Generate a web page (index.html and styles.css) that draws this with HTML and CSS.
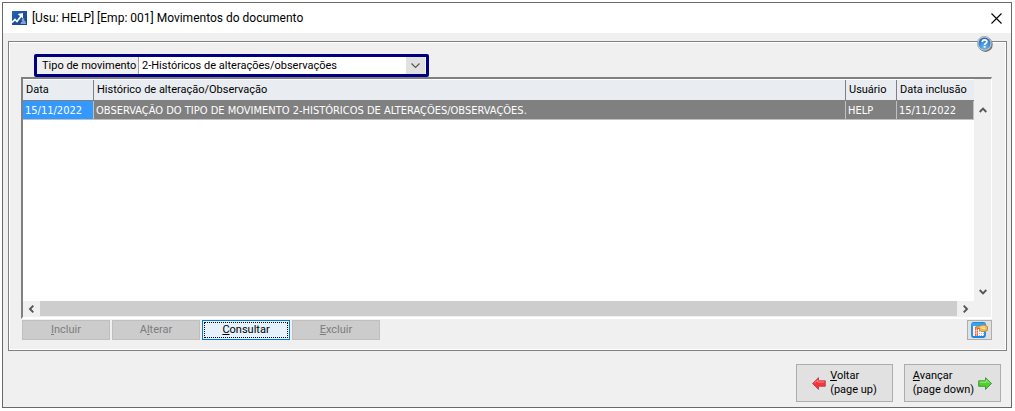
FILE: index.html
```html
<!DOCTYPE html>
<html lang="pt-BR">
<head>
<meta charset="utf-8">
<title>Movimentos do documento</title>
<link rel="stylesheet" href="styles.css">
</head>
<body>
<div class="window">
  <header class="titlebar">
    <svg class="app-icon" viewBox="0 0 15 14" aria-hidden="true">
      <defs><linearGradient id="app" x1="0" y1="0" x2="1" y2="1"><stop offset="0" stop-color="#2464b8"/><stop offset="1" stop-color="#153e88"/></linearGradient></defs>
      <rect width="15" height="14" fill="url(#app)"/>
      <path d="M0 11.500L3 8.500L5 10.500L9.500 4.500" fill="none" stroke="#fff" stroke-width="1.700"/>
      <path d="M5.500 3L11 2V7.500Z" fill="#fff"/>
      <path d="M11 7l1.500 1-.5 1.500 1.500.5v1.500l1 1.500H8.500l.5-2 1.500-.5-1-1.500z" fill="#7fa3d2"/>
    </svg>
    <h1 class="title">[Usu: HELP] [Emp: 001] Movimentos do documento</h1>
    <button class="close" type="button" aria-label="Fechar">
      <svg viewBox="0 0 11 11"><path d="M.5.5l10 10M10.500.5l-10 10" fill="none" stroke="#000" stroke-width="1.1"/></svg>
    </button>
  </header>
  <main class="content">
    <section class="panel">
      <button class="help" type="button" aria-label="Ajuda">
        <svg viewBox="0 0 16 16">
          <defs><radialGradient id="help" cx=".5" cy=".8" r=".8"><stop offset="0" stop-color="#63bdf5"/><stop offset="1" stop-color="#2463b8"/></radialGradient></defs>
          <circle cx="8.500" cy="8.700" r="7.200" fill="#777"/>
          <circle cx="7.500" cy="7.500" r="7.200" fill="#c5ccd5" stroke="#888" stroke-width=".5"/>
          <circle cx="7.500" cy="7.500" r="6" fill="url(#help)"/>
          <path d="M5.300 6c0-3 4.600-2.700 4.600-.3 0 1.500-2.300 1.500-2.300 3.200" fill="none" stroke="#fff" stroke-width="1.700"/>
          <rect x="6.700" y="10" width="1.800" height="1.600" fill="#fff"/>
        </svg>
      </button>
      <div class="filter">
        <label class="filter-label" for="tipo">Tipo de movimento</label>
        <div class="combo">
          <select id="tipo" class="combo-select">
            <option>2-Históricos de alterações/observações</option>
          </select>
          <span class="combo-arrow"><svg viewBox="0 0 9 5"><path d="M.5.5l4 4 4-4" fill="none" stroke="#555" stroke-width="1.100"/></svg></span>
        </div>
      </div>
      <div class="grid">
        <div class="grid-view">
          <table class="table">
            <colgroup><col class="col-date"><col><col class="col-user"><col class="col-added"></colgroup>
            <thead><tr><th>Data</th><th>Histórico de alteração/Observação</th><th>Usuário</th><th>Data inclusão</th></tr></thead>
            <tbody><tr><td class="current">15/11/2022</td><td>OBSERVAÇÃO DO TIPO DE MOVIMENTO 2-HISTÓRICOS DE ALTERAÇÕES/OBSERVAÇÕES.</td><td>HELP</td><td>15/11/2022</td></tr></tbody>
          </table>
        </div>
        <div class="vscroll">
          <svg class="v-arrow" viewBox="0 0 8 6"><path d="M.7 5L4 1.700 7.300 5" fill="none" stroke="#555" stroke-width="1.900"/></svg>
          <svg class="v-arrow" viewBox="0 0 8 6"><path d="M.7 1L4 4.300 7.300 1" fill="none" stroke="#555" stroke-width="1.900"/></svg>
        </div>
        <div class="hscroll">
          <svg class="h-arrow" viewBox="0 0 6 8"><path d="M5.300.7L2 4l3.300 3.300" fill="none" stroke="#555" stroke-width="1.900"/></svg>
          <span class="thumb"></span>
          <svg class="h-arrow" viewBox="0 0 6 8"><path d="M.7.7L4 4 .7 7.300" fill="none" stroke="#555" stroke-width="1.900"/></svg>
        </div>
      </div>
      <div class="actions">
        <button class="btn" type="button" disabled><span><u>I</u>ncluir</span></button>
        <button class="btn" type="button" disabled><span>A<u>l</u>terar</span></button>
        <button class="btn btn-focus" type="button"><span><u>C</u>onsultar</span></button>
        <button class="btn" type="button" disabled><span><u>E</u>xcluir</span></button>
        <button class="btn-config" type="button" aria-label="Configurar grade">
          <svg viewBox="0 0 17 16">
            <rect x="1" y="1" width="13" height="14" rx="1.500" fill="#f4f5ff" stroke="#1689e4" stroke-width="1.800"/>
            <path d="M1 1h13v3H1z" fill="#35a5f2"/>
            <path d="M4 5h5v2H7v7H4z" fill="#f5643c"/>
            <path d="M5.500 6v8M4 8.500h3M4 11h3" stroke="#fff" stroke-width=".5"/>
            <path d="M8 9.500h6M8 11.500h6M8 13.500h6" stroke="#a9b5dc" stroke-width="1" stroke-dasharray="1 1"/>
            <path d="M5 4.300h4l2-1.300h3l2.500 1.500v4L14 9.500h-3L8.500 8.500V6H5z" fill="#edba58" stroke="#b77a28" stroke-width=".7"/>
            <path d="M9 5h5M10.500 6.500h3.500" stroke="#ffe6a2"/>
          </svg>
        </button>
      </div>
    </section>
    <nav class="nav">
      <button class="nav-btn" type="button">
        <svg class="nav-arrow" viewBox="0 0 14 13"><path d="M.5 6.500L6.500 .7v3.100H13.300v5.500H6.500v3.100z" fill="#f8333c" stroke="#b93642" stroke-width=".8"/><path d="M2.500 6L5.800 3v2h6.500" fill="none" stroke="#ff858a"/></svg>
        <span><u>V</u>oltar<br>(page up)</span>
      </button>
      <button class="nav-btn" type="button">
        <span><u>A</u>vançar<br>(page down)</span>
        <svg class="nav-arrow" viewBox="0 0 14 13"><path d="M13.500 6.500L7.500 .7v3.100H.7v5.500h6.800v3.100z" fill="#4ed12e" stroke="#30812a" stroke-width=".8"/><path d="M1.700 5.200h6.500V3l3.300 3" fill="none" stroke="#9af080"/></svg>
      </button>
    </nav>
  </main>
</div>
</body>
</html>
```
FILE: styles.css
```css
* { box-sizing: border-box; }
body {
  margin: 0;
  padding: 2px 3px 3px 2px;
  min-height: 100vh;
  display: flex;
  background: #fff;
  color: #000;
  font: 11px/14px Roboto, sans-serif;
}
svg { display: block; }
button, select { font: inherit; color: inherit; margin: 0; padding: 0; border-radius: 0; }
.window {
  flex: 1;
  min-width: 0;
  display: flex;
  flex-direction: column;
  border: 1px solid #696969;
  background: #f0f0f0;
}
.titlebar {
  display: flex;
  align-items: center;
  height: 30px;
  padding: 0 9px;
  background: #fff;
}
.app-icon { width: 15px; height: 14px; }
.title { flex: 1; margin: 0 0 0 5px; font: 12px/16px Roboto, sans-serif; }
.close { border: 0; background: none; }
.close svg { width: 11px; height: 11px; }
.content { flex: 1; display: flex; flex-direction: column; padding: 8px 4px 5px 5px; }
.panel {
  position: relative;
  flex: 1;
  display: flex;
  flex-direction: column;
  padding: 12px 14px 10px 12px;
  border: 1px solid #828282;
  box-shadow: inset 1px 1px #fff, inset -1px -1px #fff;
}
.help { position: absolute; top: -6px; right: 13px; border: 0; background: none; }
.help svg { width: 16px; height: 16px; }
.filter {
  align-self: flex-start;
  display: flex;
  width: 395px;
  height: 23px;
  margin-left: 13px;
  border: 3px solid #000080;
  border-radius: 2px;
}
.filter-label { width: 102px; padding-left: 5px; line-height: 18px; border-right: 1px solid #a0a0a0; white-space: nowrap; }
.combo { position: relative; flex: 1; }
.combo-select {
  display: block;
  width: 100%;
  height: 17px;
  padding-left: 3px;
  border: 0;
  background: #fff;
  appearance: none;
  outline: 0;
}
.combo-arrow {
  position: absolute;
  top: 0;
  right: 0;
  bottom: 0;
  width: 20px;
  display: grid;
  place-items: center;
  background: #e1e1e1;
  border-right: 1px solid #f5f5f5;
  pointer-events: none;
}
.combo-arrow svg { width: 9px; height: 5px; }
.grid {
  flex: 1;
  display: grid;
  grid-template-columns: 1fr 17px;
  grid-template-rows: 1fr 16px;
  border: solid;
  border-width: 2px 1px 2px 2px;
  border-color: #808080 #fff #fff #808080;
  background: #f0f0f0;
}
.grid-view { background: #fff; padding-top: 1px; }
.table { width: 100%; table-layout: fixed; border-collapse: separate; border-spacing: 0; }
.col-date { width: 71px; }
.col-user { width: 51px; }
.col-added { width: 77px; }
.table th, .table td { text-align: left; font-weight: normal; white-space: nowrap; overflow: hidden; }
.table th {
  height: 21px;
  padding: 0 0 0 3px;
  background: #e9edf1;
  border-right: 1px solid #808080;
  border-bottom: 1px solid #808080;
}
.table th:last-child { border-right: 0; }
.table td {
  height: 19px;
  padding: 1px 0 0 2px;
  background: #808080;
  border-right: 1px solid #c0c0c0;
  border-bottom: 1px solid #c0c0c0;
  color: #fff;
  font-family: "DejaVu Sans Condensed", sans-serif;
}
.table td.current { background: #3399ff; }
.vscroll {
  display: flex;
  flex-direction: column;
  align-items: center;
  justify-content: space-between;
  padding: 28px 0 6px;
}
.v-arrow { width: 8px; height: 6px; }
.hscroll { display: flex; align-items: center; gap: 6px; padding: 0 5px; }
.h-arrow { width: 6px; height: 8px; }
.thumb { flex: 1; height: 15px; align-self: flex-start; background: #cdcdcd; }
.actions { display: flex; gap: 2px; padding: 1px 0 0 1px; }
.btn { width: 88px; height: 20px; border: 1px solid #bfbfbf; background: #ccc; }
.btn:disabled { color: #7c7c7c; }
.btn-focus { padding: 0 1px; border-color: #0078d7; background: #e5f1fb; }
.btn-focus span { display: block; height: 16px; border: 1px dotted #000; line-height: 14px; }
.btn-config {
  width: 25px;
  height: 20px;
  margin-left: auto;
  display: grid;
  place-items: center;
  border: 1px solid #adadad;
  background: #e1e1e1;
}
.btn-config svg { width: 17px; height: 16px; }
.nav { display: flex; justify-content: flex-end; gap: 11px; padding: 13px 6px 0; }
.nav-btn {
  display: flex;
  align-items: center;
  justify-content: center;
  gap: 4px;
  width: 97px;
  height: 38px;
  border: 1px solid #adadad;
  background: #e1e1e1;
  text-align: left;
}
.nav-arrow { width: 14px; height: 13px; }
```
